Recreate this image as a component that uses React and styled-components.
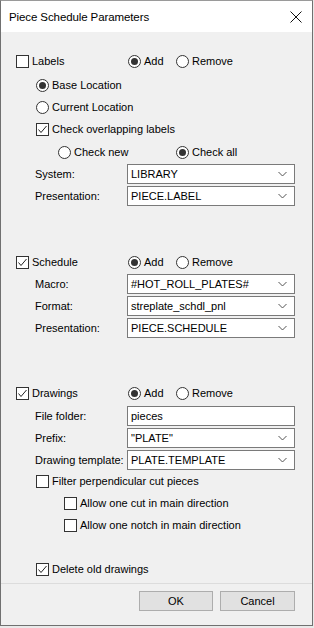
import React from "react";
import styled, { createGlobalStyle } from "styled-components";

const GlobalStyle = createGlobalStyle`
  html, body {
    margin: 0;
    padding: 0;
    background: #e9e9e9;
  }
  body {
    font-family: "Liberation Sans", Arial, sans-serif;
    font-size: 11px;
    color: #000;
  }
`;

const Window = styled.div`
  box-sizing: border-box;
  width: 313px;
  height: 626px;
  border: 1px solid #707070;
  border-top-color: #9a9a9a;
  background: #f0f0f0;
  display: flex;
  flex-direction: column;
`;

const TitleBar = styled.div`
  height: 31px;
  background: #fff;
  display: flex;
  align-items: center;
  justify-content: space-between;
  padding: 0 10px 0 8px;
  flex-shrink: 0;
`;

const Title = styled.span`
  font-size: 11.5px;
  letter-spacing: -0.1px;
  font-family: "Liberation Sans", Arial, sans-serif;
  padding-top: 1px;
`;

const Body = styled.div`
  flex: 1;
  display: flex;
  flex-direction: column;
  padding-top: 18px;
`;

const Row = styled.div`
  display: flex;
  align-items: center;
  height: 22px;
  margin-top: ${(p) => p.$mt || 0}px;
  padding-left: ${(p) => p.$indent || 15}px;
`;

const FieldRow = styled.div`
  display: flex;
  align-items: center;
  height: 20px;
  margin-top: ${(p) => p.$mt || 0}px;
  padding-left: 34px;
`;

const FieldLabel = styled.span`
  width: 92px;
  white-space: nowrap;
`;

const Option = styled.label`
  display: flex;
  align-items: center;
  gap: 3px;
  width: ${(p) => (p.$w ? `${p.$w}px` : "auto")};
  white-space: nowrap;
`;

const Box = styled.span`
  box-sizing: border-box;
  width: 13px;
  height: 13px;
  border: 1px solid #333;
  background: #fff;
  display: flex;
  align-items: center;
  justify-content: center;
  flex-shrink: 0;
`;

const Circle = styled.span`
  box-sizing: border-box;
  width: 13px;
  height: 13px;
  border: 1px solid #333;
  border-radius: 50%;
  background: #fff;
  display: flex;
  align-items: center;
  justify-content: center;
  flex-shrink: 0;

  &::after {
    content: "";
    width: 7px;
    height: 7px;
    border-radius: 50%;
    background: #333;
    display: ${(p) => (p.$on ? "block" : "none")};
  }
`;

const Field = styled.div`
  box-sizing: border-box;
  width: 168px;
  height: 20px;
  border: 1px solid #7a7a7a;
  background: #fff;
  display: flex;
  align-items: center;
  justify-content: space-between;
  padding: 0 7px 0 3px;
`;

const Footer = styled.div`
  margin-top: auto;
  border-top: 1px solid #dcdcdc;
  height: 34px;
  display: flex;
  justify-content: flex-end;
  align-items: flex-start;
  gap: 7px;
  padding: 7px 17px 0 0;
`;

const Button = styled.button`
  box-sizing: border-box;
  width: ${(p) => p.$w || 74}px;
  height: 20px;
  background: #e1e1e1;
  border: 1px solid #adadad;
  font-family: "Liberation Sans", Arial, sans-serif;
  font-size: 11px;
  color: #000;
  padding: 0;
`;

const Check = ({ on }) => (
  <Box>
    {on && (
      <svg width="11" height="11" viewBox="0 0 11 11">
        <polyline points="1.5,5.5 4,8.5 9.5,2" fill="none" stroke="#222" strokeWidth="1" />
      </svg>
    )}
  </Box>
);

const CheckOption = ({ on, children, w }) => (
  <Option $w={w}>
    <Check on={on} />
    {children}
  </Option>
);

const RadioOption = ({ on, children, w }) => (
  <Option $w={w}>
    <Circle $on={on} />
    {children}
  </Option>
);

const Chevron = () => (
  <svg width="9" height="6" viewBox="0 0 9 6">
    <polyline points="0.5,1 4.5,5 8.5,1" fill="none" stroke="#555" strokeWidth="1" />
  </svg>
);

const Combo = ({ value, plain }) => (
  <Field>
    <span>{value}</span>
    {!plain && <Chevron />}
  </Field>
);

const AddRemove = () => (
  <>
    <RadioOption on w={48}>Add</RadioOption>
    <RadioOption>Remove</RadioOption>
  </>
);

const App = () => {
  return (
    <>
      <GlobalStyle />
      <Window>
        <TitleBar>
          <Title>Piece Schedule Parameters</Title>
          <svg width="12" height="12" viewBox="0 0 12 12">
            <path d="M0.5 0.5 L11.5 11.5 M11.5 0.5 L0.5 11.5" stroke="#111" strokeWidth="1" />
          </svg>
        </TitleBar>
        <Body>
          <Row>
            <CheckOption w={112}>Labels</CheckOption>
            <AddRemove />
          </Row>
          <Row $mt={2} $indent={35}>
            <RadioOption on>Base Location</RadioOption>
          </Row>
          <Row $indent={35}>
            <RadioOption>Current Location</RadioOption>
          </Row>
          <Row $indent={35}>
            <CheckOption on>Check overlapping labels</CheckOption>
          </Row>
          <Row $mt={1} $indent={57}>
            <RadioOption w={118}>Check new</RadioOption>
            <RadioOption on>Check all</RadioOption>
          </Row>
          <FieldRow $mt={1}>
            <FieldLabel>System:</FieldLabel>
            <Combo value="LIBRARY" />
          </FieldRow>
          <FieldRow $mt={2}>
            <FieldLabel>Presentation:</FieldLabel>
            <Combo value="PIECE.LABEL" />
          </FieldRow>

          <Row $mt={45}>
            <CheckOption on w={112}>Schedule</CheckOption>
            <AddRemove />
          </Row>
          <FieldRow $mt={1}>
            <FieldLabel>Macro:</FieldLabel>
            <Combo value="#HOT_ROLL_PLATES#" />
          </FieldRow>
          <FieldRow $mt={2}>
            <FieldLabel>Format:</FieldLabel>
            <Combo value="streplate_schdl_pnl" />
          </FieldRow>
          <FieldRow $mt={2}>
            <FieldLabel>Presentation:</FieldLabel>
            <Combo value="PIECE.SCHEDULE" />
          </FieldRow>

          <Row $mt={44}>
            <CheckOption on w={112}>Drawings</CheckOption>
            <AddRemove />
          </Row>
          <FieldRow $mt={2}>
            <FieldLabel>File folder:</FieldLabel>
            <Combo value="pieces" plain />
          </FieldRow>
          <FieldRow $mt={2}>
            <FieldLabel>Prefix:</FieldLabel>
            <Combo value={'"PLATE"'} />
          </FieldRow>
          <FieldRow $mt={2}>
            <FieldLabel>Drawing template:</FieldLabel>
            <Combo value="PLATE.TEMPLATE" />
          </FieldRow>
          <Row $indent={35}>
            <CheckOption>Filter perpendicular cut pieces</CheckOption>
          </Row>
          <Row $indent={63}>
            <CheckOption>Allow one cut in main direction</CheckOption>
          </Row>
          <Row $indent={63}>
            <CheckOption>Allow one notch in main direction</CheckOption>
          </Row>
          <Row $mt={22} $indent={35}>
            <CheckOption on>Delete old drawings</CheckOption>
          </Row>

          <Footer>
            <Button $w={74}>OK</Button>
            <Button $w={75}>Cancel</Button>
          </Footer>
        </Body>
      </Window>
    </>
  );
};

export default App;
